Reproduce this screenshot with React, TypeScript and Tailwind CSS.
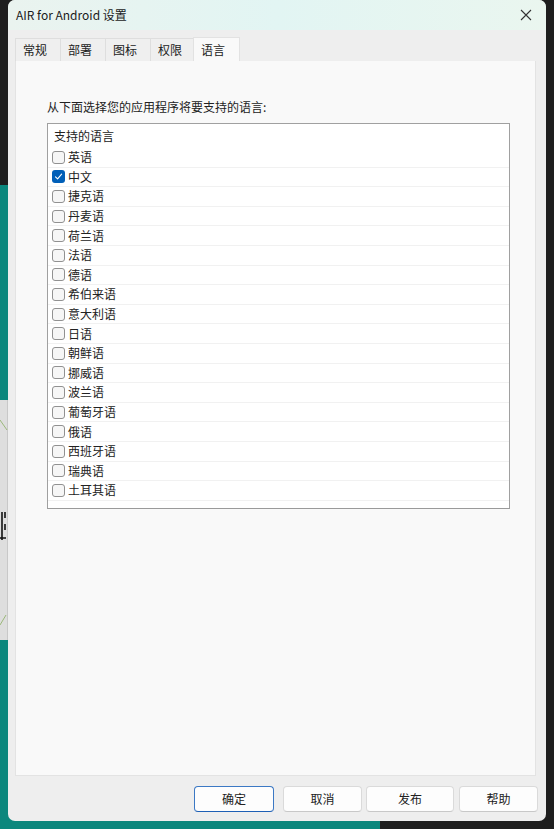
import React from "react";

const langs = [
  "英语","中文","捷克语","丹麦语","荷兰语","法语","德语","希伯来语","意大利语","日语","朝鲜语","挪威语","波兰语","葡萄牙语","俄语","西班牙语","瑞典语","土耳其语",
];

const font = { fontFamily: '"Noto Sans CJK SC", "Noto Sans", sans-serif' };

function Check({ checked }: { checked: boolean }) {
  if (checked) {
    return (
      <div className="w-[13px] h-[13px] rounded-[3px] bg-[#005fb8] flex items-center justify-center shrink-0">
        <svg width="9" height="9" viewBox="0 0 9 9">
          <path d="M1.5 4.8 L3.6 6.8 L7.6 2.2" stroke="white" strokeWidth="1.1" fill="none" strokeLinecap="round" strokeLinejoin="round" />
        </svg>
      </div>
    );
  }
  return <div className="w-[13px] h-[13px] rounded-[3px] border border-[#919191] bg-[#f6f6f6] shrink-0" />;
}

export default function App() {
  return (
    <div className="relative w-[554px] h-[829px] bg-[#1e1e1e] overflow-hidden" style={font}>
      {/* desktop behind */}
      <div className="absolute left-0 top-[185px] w-[380px] h-[644px] bg-[#0b877d]" />
      <div className="absolute left-0 top-[400px] w-[8px] h-[240px] bg-[#dedede] border-r border-[#c8c8c8]">
        <svg className="absolute left-0 top-0" width="8" height="240" viewBox="0 0 8 240">
          <path d="M0 20 L7 30 M0 225 L6 215" stroke="#9bb87a" strokeWidth="1" />
          <path d="M2 112 L2 140 M5 112 L5 118 M5 124 L5 130 M0 138 L6 138" stroke="#111" strokeWidth="1.6" />
        </svg>
      </div>
      {/* window */}
      <div className="absolute left-[8px] top-0 w-[538px] h-[821px] rounded-[7px] bg-[#eeeeee] flex flex-col overflow-hidden">
        <div className="h-[30px] shrink-0 flex items-center justify-between pl-[8px] pr-[14px] bg-gradient-to-r from-[#eaf3ef] via-[#e2f5f3] to-[#eaf6ef]">
          <span className="text-[12px] text-[#1a1a1a] leading-none">AIR for Android 设置</span>
          <svg width="12" height="12" viewBox="0 0 12 12">
            <path d="M1 1 L11 11 M11 1 L1 11" stroke="#333" strokeWidth="1.1" />
          </svg>
        </div>
        <div className="h-[7px] shrink-0" />
        {/* tabs */}
        <div className="flex pl-[7px] h-[24px] items-end shrink-0">
          {["常规", "部署", "图标", "权限"].map((t, i) => (
            <div
              key={t}
              className={`h-[23px] flex items-center pl-[7px] text-[12px] text-[#222] bg-[#efefef] border-t border-l border-[#dedede] ${i === 3 ? "w-[43px]" : "w-[45px]"}`}
            >
              {t}
            </div>
          ))}
          <div className="h-[24px] w-[47px] flex items-center pl-[7px] text-[12px] text-[#222] bg-[#f9f9f9] border-t border-l border-r border-[#e2e2e2]">
            语言
          </div>
        </div>
        {/* panel */}
        <div className="ml-[7px] mr-[10px] h-[715px] shrink-0 bg-[#f9f9f9] border border-t-0 border-[#e3e3e3] pt-[38px] pl-[31px] pr-[27px]">
          <div className="text-[12px] text-[#222] leading-[16px] h-[16px]">从下面选择您的应用程序将要支持的语言:</div>
          <div className="mt-[8px] w-[463px] h-[386px] bg-white border border-[#a0a0a0] border-b-[#9a9a9a]">
            <div className="h-[24px] flex items-center pl-[6px] text-[12px] text-[#222]">支持的语言</div>
            {langs.map((l, i) => (
              <div key={l} className="h-[19.6px] flex items-center pl-[4px] gap-[3px] border-b border-[#f1f1f1]">
                <Check checked={i === 1} />
                <span className="text-[12px] text-[#222] leading-none">{l}</span>
              </div>
            ))}
          </div>
        </div>
        {/* buttons */}
        <div className="flex pt-[10px] pl-[186px] text-[12px] text-[#222]">
          <button className="w-[80px] h-[26px] rounded-[4px] bg-[#fdfdfd] border border-[#3b78c4] border-b-[#1d5fb5]">确定</button>
          <button className="ml-[9px] w-[79px] h-[26px] rounded-[4px] bg-[#fdfdfd] border border-[#dadada] border-b-[#c8c8c8]">取消</button>
          <button className="ml-[4px] w-[88px] h-[26px] rounded-[4px] bg-[#fdfdfd] border border-[#dadada] border-b-[#c8c8c8]">发布</button>
          <button className="ml-[5px] w-[79px] h-[26px] rounded-[4px] bg-[#fdfdfd] border border-[#dadada] border-b-[#c8c8c8]">帮助</button>
        </div>
      </div>
    </div>
  );
}
